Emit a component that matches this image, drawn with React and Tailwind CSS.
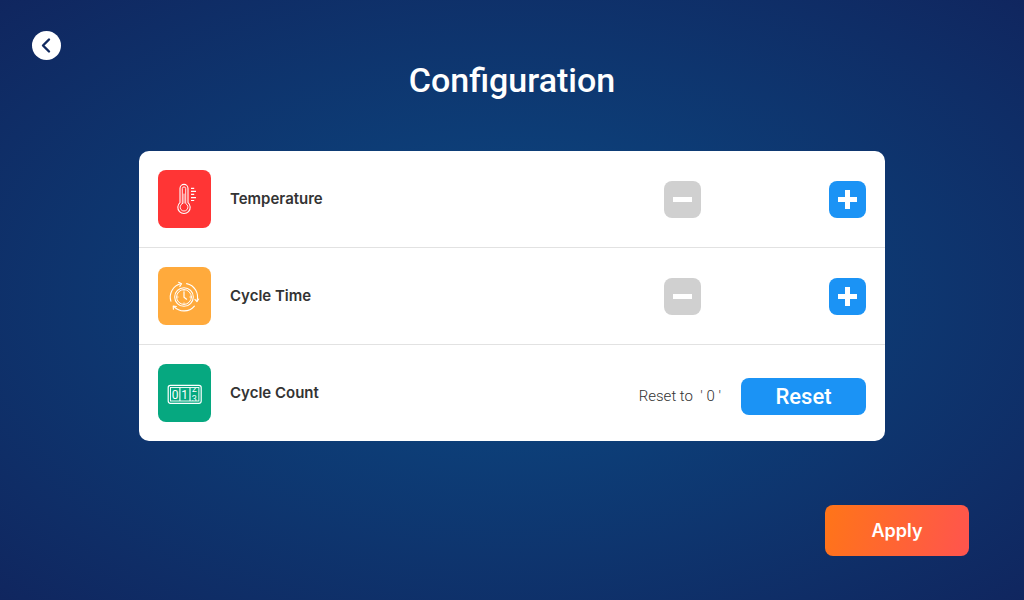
import React from "react";

function ThermometerIcon() {
  return (
    <svg viewBox="0 0 53 58" className="h-full w-full" fill="none" stroke="white" strokeLinecap="round" aria-hidden="true">
      <path strokeWidth="1.1" d="M22 32.6V18.4a4 4 0 0 1 8 0v14.2a6.2 6.2 0 1 1-8 0Z" />
      <path strokeWidth="0.9" d="M24.3 33.6V18.6a1.7 1.7 0 0 1 3.4 0v15a3.9 3.9 0 1 1-3.4 0Z" />
      <path strokeWidth="0.9" d="M26 24v9" />
      <path strokeWidth="1.2" strokeLinecap="butt" d="M33 18.3h3.2M33 21.4h5M33 24.4h3.2M33 27.6h5M33 30.5h3.2" />
    </svg>
  );
}

function CycleTimeIcon() {
  return (
    <svg viewBox="0 0 53 58" className="h-full w-full" fill="none" stroke="white" strokeLinecap="round" aria-hidden="true">
      <circle cx="26" cy="30" r="9.3" strokeWidth="1.1" />
      <circle cx="26" cy="30" r="7.4" strokeWidth="1" />
      <path strokeWidth="1.2" d="M26 25v5.2l2.6 2" />
      <path strokeWidth="0.8" d="M26 22.8v1.4M26 35.8v1.4M18.8 30h1.4M31.8 30h1.4" />
      <path strokeWidth="1.1" d="M12.9 34.2A13.7 13.7 0 0 1 22.6 16.8M28.6 16.6A13.7 13.7 0 0 1 39 34M36.4 39.1A13.7 13.7 0 0 1 16 39.6" />
      <path strokeWidth="1.1" strokeLinejoin="round" d="M20.6 15.2l3 1.5-1.8 2.7M36.9 32.3l2 2.3 1.8-2.6M15.4 42.2l-.2-3.2 3.2.5" />
    </svg>
  );
}

function CycleCountIcon() {
  return (
    <svg viewBox="0 0 53 58" className="h-full w-full" fill="none" stroke="white" aria-hidden="true">
      <defs>
        <clipPath id="reel-upper"><rect x="32" y="24" width="9" height="5" /></clipPath>
        <clipPath id="reel-lower"><rect x="32" y="30" width="9" height="7" /></clipPath>
      </defs>
      <rect x="10.2" y="21.3" width="33" height="18" rx="2.2" strokeWidth="1.2" />
      <rect x="12.5" y="23.5" width="28.4" height="13.5" strokeWidth="0.9" />
      <path strokeWidth="1.1" d="M21.9 23.5v13.5M32 23.5v13.5" />
      <g fill="white" stroke="none" fontFamily="Roboto, sans-serif" textAnchor="middle">
        <text x="17.2" y="34.6" fontSize="12">0</text>
        <text x="26.6" y="34.6" fontSize="12">1</text>
        <text x="36.4" y="27.6" fontSize="9" clipPath="url(#reel-upper)">2</text>
        <text x="36.4" y="38.4" fontSize="9" clipPath="url(#reel-lower)">3</text>
      </g>
    </svg>
  );
}

function SettingRow({ color, icon, label, children }) {
  return (
    <li className="box-content flex h-24 items-center">
      <div className={`h-[58px] w-[53px] shrink-0 rounded-lg ${color}`}>{icon}</div>
      <h2 className="ml-[19px] flex-1 text-[15px] leading-5 font-semibold text-[#333333]">{label}</h2>
      {children}
    </li>
  );
}

function Stepper({ label }) {
  return (
    <div className="flex items-center gap-32" role="group" aria-label={label}>
      <button type="button" aria-label={`Decrease ${label}`} className="flex size-[37px] items-center justify-center rounded-lg bg-[#d0d0d0]">
        <svg viewBox="0 0 19 19" className="size-[19px]" fill="white" aria-hidden="true">
          <path d="M0 7h19v5H0z" />
        </svg>
      </button>
      <button type="button" aria-label={`Increase ${label}`} className="flex size-[37px] items-center justify-center rounded-lg bg-[#1b93f5]">
        <svg viewBox="0 0 19 19" className="size-[19px]" fill="white" aria-hidden="true">
          <path d="M0 7h7V0h5v7h7v5h-7v7H7v-7H0z" />
        </svg>
      </button>
    </div>
  );
}

export default function App() {
  return (
    <div className="flex min-h-screen flex-col bg-[radial-gradient(ellipse_farthest-corner_at_center,#0b4b85_0%,#10265f_100%)] pt-[31px] pb-11 font-[Inter,sans-serif]">
      <nav className="flex px-8">
        <button type="button" aria-label="Back" className="flex size-[29px] items-center justify-center rounded-full bg-white">
          <svg viewBox="0 0 29 29" className="size-[29px]" fill="none" stroke="#10295f" strokeWidth="2.4" strokeLinecap="round" strokeLinejoin="round" aria-hidden="true">
            <path d="M17 8.5l-6 6 6 6" />
          </svg>
        </button>
      </nav>

      <main className="flex flex-1 flex-col">
        <h1 className="text-center font-[Roboto,sans-serif] text-[34px] leading-10 font-medium text-white">Configuration</h1>

        <div className="mt-[51px] px-8">
          <ul className="mx-auto max-w-[746px] divide-y divide-[#e2e2e2] rounded-[10px] bg-white *:px-[19px]">
            <SettingRow color="bg-[#ff3535]" icon={<ThermometerIcon />} label="Temperature">
              <Stepper label="Temperature" />
            </SettingRow>
            <SettingRow color="bg-[#ffaa3c]" icon={<CycleTimeIcon />} label="Cycle Time">
              <Stepper label="Cycle Time" />
            </SettingRow>
            <SettingRow color="bg-[#06a880]" icon={<CycleCountIcon />} label="Cycle Count">
              <div className="flex items-center gap-5 pt-1.5 font-[Roboto,sans-serif]">
                <span className="text-[15px] leading-5 font-light text-[#333333]">Reset to &nbsp;' 0 '</span>
                <button type="button" className="h-[37px] w-[125px] rounded-lg bg-[#1b93f5] text-[22px] font-medium text-white">
                  Reset
                </button>
              </div>
            </SettingRow>
          </ul>
        </div>

        <div className="mt-16 flex justify-end px-[55px]">
          <button type="button" className="h-[51px] w-36 rounded-lg bg-linear-[105deg] from-[#ff7518] to-[#ff544e] text-[18px] font-semibold text-white">
            Apply
          </button>
        </div>
      </main>
    </div>
  );
}
